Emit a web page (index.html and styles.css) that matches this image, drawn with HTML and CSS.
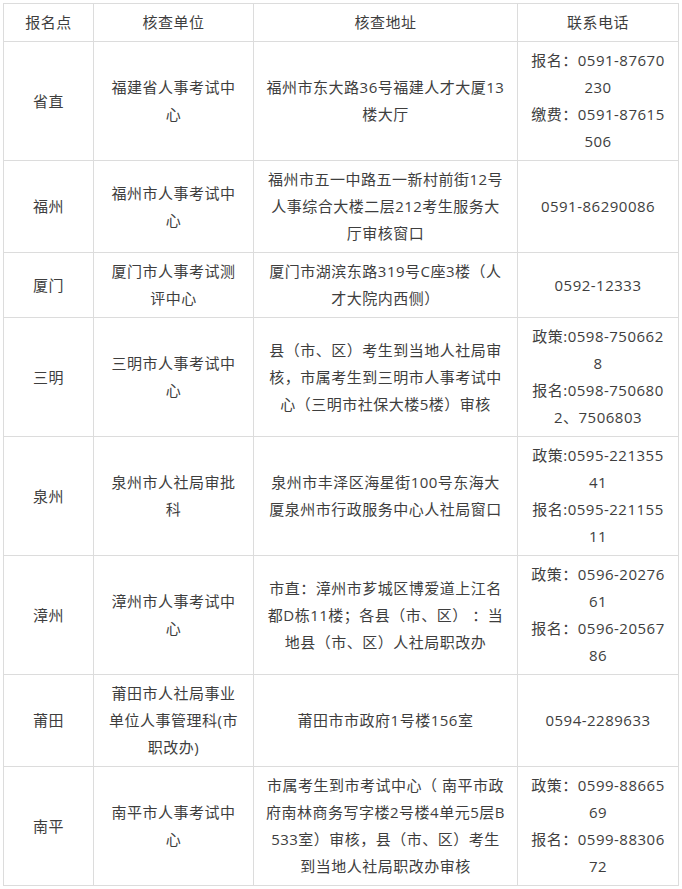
FILE: index.html
```html
<!DOCTYPE html>
<html lang="zh-CN">
<head>
<meta charset="utf-8">
<title>核查地点</title>
<link rel="stylesheet" href="styles.css">
</head>
<body>
<div class="page">
<table class="sheet">
  <colgroup>
    <col class="c-site">
    <col class="c-unit">
    <col class="c-addr">
    <col class="c-tel">
  </colgroup>
  <thead>
    <tr><th>报名点</th><th>核查单位</th><th>核查地址</th><th>联系电话</th></tr>
  </thead>
  <tbody>
    <tr>
      <td>省直</td>
      <td>福建省人事考试中心</td>
      <td>福州市东大路36号福建人才大厦13楼大厅</td>
      <td><div>报名：0591-87670230</div><div>缴费：0591-87615506</div></td>
    </tr>
    <tr>
      <td>福州</td>
      <td>福州市人事考试中心</td>
      <td>福州市五一中路五一新村前街12号人事综合大楼二层212考生服务大厅审核窗口</td>
      <td>0591-86290086</td>
    </tr>
    <tr>
      <td>厦门</td>
      <td>厦门市人事考试测评中心</td>
      <td>厦门市湖滨东路319号C座3楼（人才大院内西侧）</td>
      <td>0592-12333</td>
    </tr>
    <tr>
      <td>三明</td>
      <td>三明市人事考试中心</td>
      <td>县（市、区）考生到当地人社局审核，市属考生到三明市人事考试中心（三明市社保大楼5楼）审核</td>
      <td><div>政策:0598-7506628</div><div>报名:0598-7506802、7506803</div></td>
    </tr>
    <tr>
      <td>泉州</td>
      <td>泉州市人社局审批科</td>
      <td>泉州市丰泽区海星街100号东海大厦泉州市行政服务中心人社局窗口</td>
      <td><div>政策:0595-22135541</div><div>报名:0595-22115511</div></td>
    </tr>
    <tr>
      <td>漳州</td>
      <td>漳州市人事考试中心</td>
      <td>市直：漳州市芗城区博爱道上江名都D栋11楼；各县（市、区） ：当地县（市、区）人社局职改办</td>
      <td><div>政策：0596-2027661</div><div>报名：0596-2056786</div></td>
    </tr>
    <tr>
      <td>莆田</td>
      <td>莆田市人社局事业单位人事管理科(市职改办)</td>
      <td>莆田市市政府1号楼156室</td>
      <td>0594-2289633</td>
    </tr>
    <tr>
      <td>南平</td>
      <td>南平市人事考试中心</td>
      <td>市属考生到市考试中心（ 南平市政府南林商务写字楼2号楼4单元5层B533室）审核，县（市、区）考生到当地人社局职改办审核</td>
      <td><div>政策：0599-8866569</div><div>报名：0599-8830672</div></td>
    </tr>
  </tbody>
</table>
</div>
</body>
</html>
```

FILE: styles.css
```css
html, body {
  margin: 0;
  padding: 0;
  background: #ffffff;
}

.page {
  padding: 3px 0 0 3px;
}

.sheet {
  border-collapse: collapse;
  table-layout: fixed;
  width: 675px;
  font-family: "Open Sans", "Noto Sans CJK SC", sans-serif;
  font-size: 15px;
  letter-spacing: 0.5px;
  color: #3e3e3e;
}

.c-site { width: 90px; }
.c-unit { width: 160px; }
.c-addr { width: 264px; }
.c-tel { width: 161px; }

.sheet th,
.sheet td {
  border: 1px solid #dcdcdc;
  padding: 5px 10px;
  line-height: 27px;
  text-align: center;
  vertical-align: middle;
  font-weight: normal;
  word-break: break-all;
}
```
